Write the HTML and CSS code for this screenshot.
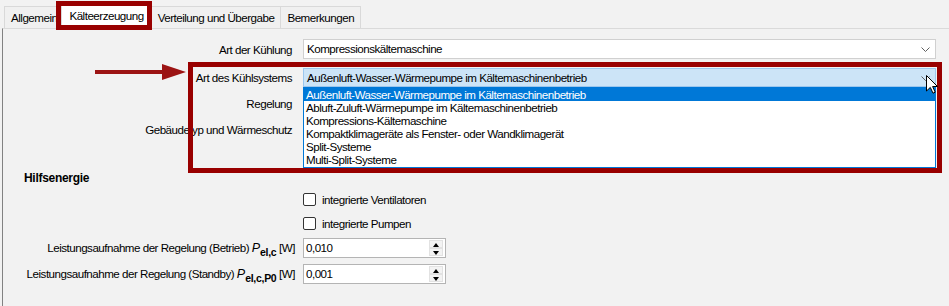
FILE: index.html
```html
<html>
<head>
    <title>Kälteerzeugung</title>
    <link rel="stylesheet" href="styles.css">
</head>
<body>
    <div class="tabs">
        <div class="tab">Allgemein</div>
        <div class="tab active">Kälteerzeugung</div>
        <div class="tab">Verteilung und Übergabe</div>
        <div class="tab">Bemerkungen</div>
    </div>
    <div class="panel">
        <div class="row r1">
            <div class="label">Art der Kühlung</div>
            <div class="combo">Kompressionskältemaschine
                <svg class="chevron" width="9" height="5" viewBox="0 0 9 5"><path d="M0.5 0.5 L4.5 4.5 L8.5 0.5" fill="none" stroke="#606060"/></svg>
            </div>
        </div>
        <div class="row r2">
            <div class="label">Art des Kühlsystems</div>
            <div class="combo open">Außenluft-Wasser-Wärmepumpe im Kältemaschinenbetrieb
                <svg class="chevron" width="9" height="5" viewBox="0 0 9 5"><path d="M0.5 0.5 L4.5 4.5 L8.5 0.5" fill="none" stroke="#606060"/></svg>
                <ul class="dropdown">
                    <li class="sel">Außenluft-Wasser-Wärmepumpe im Kältemaschinenbetrieb</li>
                    <li>Abluft-Zuluft-Wärmepumpe im Kältemaschinenbetrieb</li>
                    <li>Kompressions-Kältemaschine</li>
                    <li>Kompaktklimageräte als Fenster- oder Wandklimagerät</li>
                    <li>Split-Systeme</li>
                    <li>Multi-Split-Systeme</li>
                </ul>
            </div>
        </div>
        <div class="row r3">
            <div class="label">Regelung</div>
            <div class="combo"></div>
        </div>
        <div class="row r3">
            <div class="label">Gebäudetyp und Wärmeschutz</div>
            <div class="combo"></div>
        </div>

        <div class="group-title">Hilfsenergie</div>

        <div class="row r-check1">
            <div class="label"></div>
            <span class="check"></span>integrierte Ventilatoren
        </div>
        <div class="row r-check2">
            <div class="label"></div>
            <span class="check"></span>integrierte Pumpen
        </div>
        <div class="row r-spin1">
            <div class="label wide">Leistungsaufnahme der Regelung (Betrieb) <i>P</i><sub>el,c</sub> [W]</div>
            <div class="spin">
                <span class="value">0,010</span>
                <span class="arrows"><span class="up"></span><span class="down"></span></span>
            </div>
        </div>
        <div class="row r-spin2">
            <div class="label wide">Leistungsaufnahme der Regelung (Standby) <i>P</i><sub>el,c,P0</sub> [W]</div>
            <div class="spin">
                <span class="value">0,001</span>
                <span class="arrows"><span class="up"></span><span class="down"></span></span>
            </div>
        </div>
    </div>

    <!-- annotations drawn over the screenshot -->
    <div class="mark mark-tab"></div>
    <div class="mark mark-list"></div>
    <svg class="arrow" width="93" height="18" viewBox="0 0 93 18">
        <rect x="0" y="7" width="70" height="4" fill="#9c1414"/>
        <polygon points="67,1 91,9 67,17" fill="#9c1414"/>
    </svg>
    <svg class="cursor" width="12" height="19" viewBox="0 0 12 19">
        <polygon points="0.5,0.5 0.5,16 4.3,12.4 7,18.2 9.2,17.2 6.6,11.5 11.5,11.5" fill="#fff" stroke="#000" stroke-width="1"/>
    </svg>
</body>
</html>
```

FILE: styles.css
```css
body {
    margin: 0;
    width: 949px;
    height: 306px;
    overflow: hidden;
    position: relative;
    background-color: #f2f2f2;
    color: #000;
    font-family: "Liberation Sans", Arial, sans-serif;
    font-size: 11.6px;
    letter-spacing: -0.5px;
}
.tabs {
    display: flex;
    align-items: flex-end;
    height: 28px;
    padding-left: 4px;
}
.tab {
    height: 22px;
    line-height: 21px;
    padding: 0 6px;
    border: 1px solid #d9d9d9;
    border-bottom: none;
    background-color: #f0f0f0;
    margin-right: -1px;
    box-sizing: border-box;
}
.tab.active {
    height: 25px;
    line-height: 23px;
    background-color: #fff;
    margin: 0 -1px 0 -2px;
    padding: 0 7px;
    position: relative;
    z-index: 1;
}
.panel {
    margin-left: 2px;
    height: 278px;
    border-left: 1px solid #828282;
    border-top: 1px solid #dadada;
}
.row {
    display: flex;
    align-items: center;
    height: 20px;
    margin-top: 6px;
}
.row.r1 {
    margin-top: 10px;
}
.row.r2 {
    margin-top: 8px;
}
.row.r-check1 {
    margin-top: 3px;
}
.row.r-check2 {
    margin-top: 4px;
}
.row.r-spin1 {
    margin-top: 5px;
}
.label {
    width: 289px;
    flex: none;
    text-align: right;
    margin-right: 11px;
    white-space: nowrap;
}
.label.wide {
    width: 292px;
    margin-right: 8px;
}
.label i {
    font-size: 12.5px;
    letter-spacing: 0;
}
.label sub {
    font-size: 10.5px;
    font-weight: bold;
    letter-spacing: -0.3px;
    vertical-align: -4px;
    line-height: 0;
}
.combo {
    position: relative;
    width: 633px;
    height: 20px;
    box-sizing: border-box;
    border: 1px solid #d0d0d0;
    background-color: #fff;
    padding-left: 3px;
    line-height: 18px;
    white-space: nowrap;
}
.combo.open {
    background-color: #cce4f7;
    border-color: #9cc7ee;
    height: 19px;
    line-height: 17px;
}
.chevron {
    position: absolute;
    right: 5px;
    top: 7px;
}
.dropdown {
    position: absolute;
    left: -1px;
    top: 18px;
    width: 633px;
    height: 81px;
    box-sizing: border-box;
    margin: 0;
    padding: 0;
    list-style: none;
    background-color: #fff;
    border: 1px solid #0078d7;
    box-shadow: 0 2px 0 #a0a0a0;
    z-index: 2;
}
.dropdown li {
    height: 13px;
    line-height: 13px;
    padding-left: 2px;
    white-space: nowrap;
    color: #000;
}
.dropdown li.sel {
    background-color: #0078d7;
    color: #fff;
}
.group-title {
    font-weight: bold;
    font-size: 12px;
    letter-spacing: -0.3px;
    margin: 31px 0 0 21px;
    height: 16px;
    line-height: 16px;
}
.check {
    width: 13px;
    height: 13px;
    box-sizing: border-box;
    border: 1px solid #333;
    border-radius: 2px;
    background-color: #fff;
    margin-right: 6px;
}
.spin {
    display: flex;
    width: 143px;
    height: 20px;
    box-sizing: border-box;
    border: 1px solid #b4b4b4;
    background-color: #fff;
}
.spin .value {
    flex: 1;
    padding-left: 2px;
    line-height: 17px;
}
.spin .arrows {
    display: flex;
    flex-direction: column;
    width: 14px;
    margin: 1px 2px 1px 0;
}
.spin .up,
.spin .down {
    flex: 1;
    background-color: #f3f3f3;
    border: 1px solid #e2e2e2;
    position: relative;
}
.spin .up::after,
.spin .down::after {
    content: "";
    position: absolute;
    left: 3px;
    top: 2px;
    border-left: 3.5px solid transparent;
    border-right: 3.5px solid transparent;
}
.spin .up::after {
    border-bottom: 4px solid #000;
}
.spin .down::after {
    border-top: 4px solid #000;
}
.mark {
    position: absolute;
    border: 5px solid #990000;
    box-sizing: border-box;
    z-index: 3;
}
.mark-tab {
    left: 56px;
    top: 1px;
    width: 96px;
    height: 29px;
}
.mark-list {
    left: 188px;
    top: 62px;
    width: 754px;
    height: 111px;
}
.arrow {
    position: absolute;
    left: 95px;
    top: 63px;
    z-index: 3;
}
.cursor {
    position: absolute;
    left: 926px;
    top: 75px;
    z-index: 4;
}
```
